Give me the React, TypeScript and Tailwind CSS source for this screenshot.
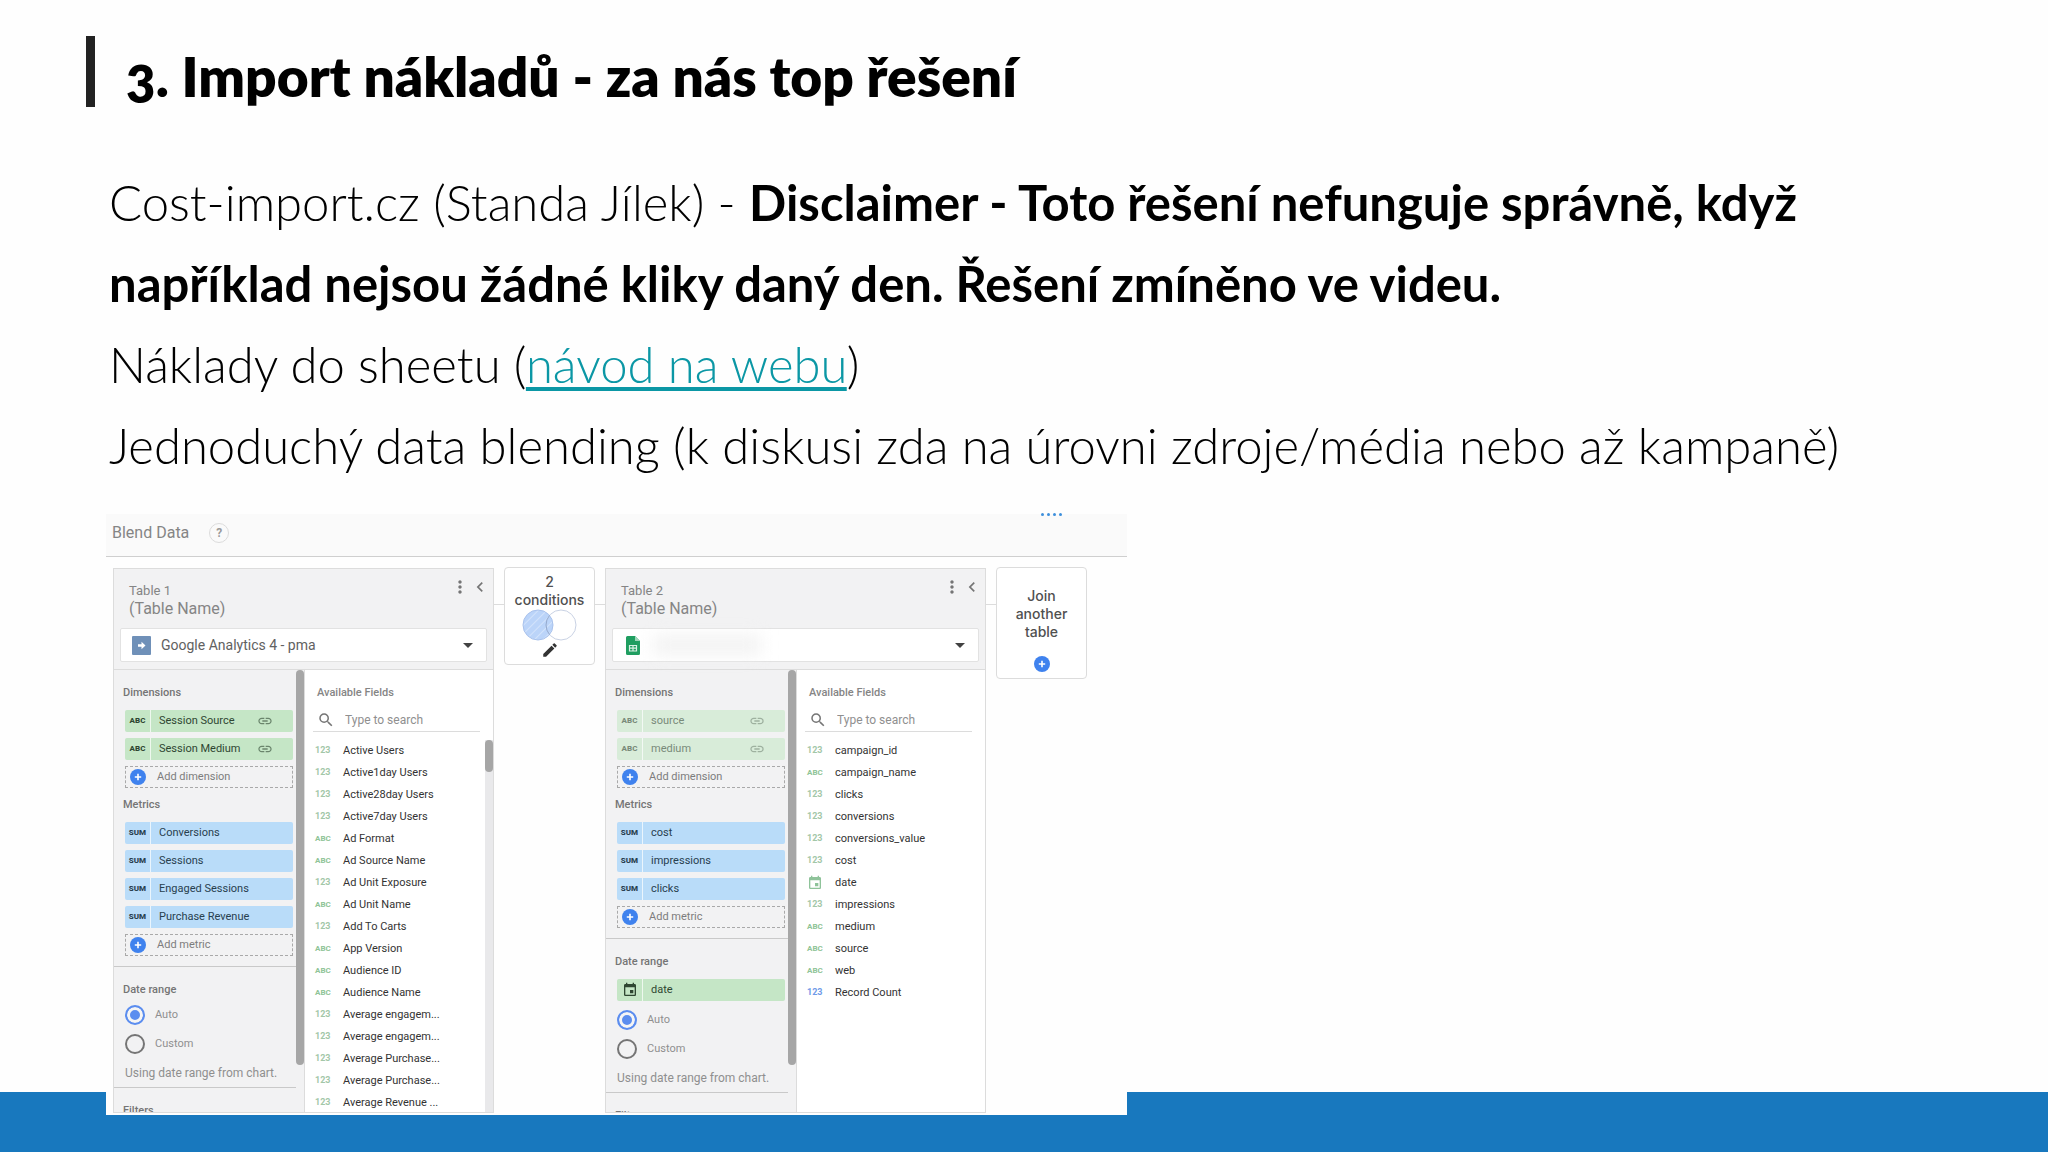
import { useState } from "react";
import type { ReactNode } from "react";
import { MdArrowDropDown, MdChevronLeft, MdEdit, MdEvent, MdLink, MdMoreVert, MdSearch } from "react-icons/md";

type FieldType = "123" | "ABC" | "DATE" | "COUNT";

interface Field {
  name: string;
  type: FieldType;
}

interface BlendTable {
  id: string;
  title: string;
  source: string;
  dimensions: string[];
  muted: boolean;
  metrics: string[];
  dateField?: string;
  fields: Field[];
  fieldsScroll: boolean;
}

const tables: BlendTable[] = [
  {
    id: "t1",
    title: "Table 1",
    source: "Google Analytics 4 - pma",
    dimensions: ["Session Source", "Session Medium"],
    muted: false,
    metrics: ["Conversions", "Sessions", "Engaged Sessions", "Purchase Revenue"],
    fieldsScroll: true,
    fields: [
      { name: "Active Users", type: "123" },
      { name: "Active1day Users", type: "123" },
      { name: "Active28day Users", type: "123" },
      { name: "Active7day Users", type: "123" },
      { name: "Ad Format", type: "ABC" },
      { name: "Ad Source Name", type: "ABC" },
      { name: "Ad Unit Exposure", type: "123" },
      { name: "Ad Unit Name", type: "ABC" },
      { name: "Add To Carts", type: "123" },
      { name: "App Version", type: "ABC" },
      { name: "Audience ID", type: "ABC" },
      { name: "Audience Name", type: "ABC" },
      { name: "Average engagem...", type: "123" },
      { name: "Average engagem...", type: "123" },
      { name: "Average Purchase...", type: "123" },
      { name: "Average Purchase...", type: "123" },
      { name: "Average Revenue ...", type: "123" },
    ],
  },
  {
    id: "t2",
    title: "Table 2",
    source: "",
    dimensions: ["source", "medium"],
    muted: true,
    metrics: ["cost", "impressions", "clicks"],
    dateField: "date",
    fieldsScroll: false,
    fields: [
      { name: "campaign_id", type: "123" },
      { name: "campaign_name", type: "ABC" },
      { name: "clicks", type: "123" },
      { name: "conversions", type: "123" },
      { name: "conversions_value", type: "123" },
      { name: "cost", type: "123" },
      { name: "date", type: "DATE" },
      { name: "impressions", type: "123" },
      { name: "medium", type: "ABC" },
      { name: "source", type: "ABC" },
      { name: "web", type: "ABC" },
      { name: "Record Count", type: "COUNT" },
    ],
  },
];

function PlusCircle() {
  return (
    <svg viewBox="0 0 16 16" className="size-4 shrink-0" aria-hidden="true">
      <circle cx="8" cy="8" r="8" fill="#3f82ee" />
      <path d="M8 4.8v6.4M4.8 8h6.4" stroke="#fff" strokeWidth="1.6" />
    </svg>
  );
}

function SheetsIcon() {
  return (
    <svg viewBox="0 0 14 19" className="h-[19px] w-[14px]" aria-hidden="true">
      <path d="M1.5 0H9l5 5v12.5a1.5 1.5 0 0 1-1.5 1.5h-11A1.5 1.5 0 0 1 0 17.5v-16A1.5 1.5 0 0 1 1.5 0z" fill="#1f9e60" />
      <path d="M9 0l5 5H9z" fill="#9ed6b9" />
      <path d="M3.5 9.5h7V15h-7zM3.5 12.2h7M7 9.5V15" fill="none" stroke="#d9f0e4" strokeWidth="1.2" />
    </svg>
  );
}

function AnalyticsIcon() {
  return (
    <svg viewBox="0 0 19 19" className="size-[19px]" aria-hidden="true">
      <rect width="19" height="19" rx="1" fill="#6f90b8" />
      <path d="M6 8.2h3.5V5.8l4 3.7-4 3.7v-2.400H6z" fill="#fff" />
    </svg>
  );
}

function VennIcon() {
  return (
    <svg viewBox="0 0 56 32" className="h-8 w-14" aria-hidden="true">
      <defs>
        <pattern id="hatch" width="6" height="6" patternUnits="userSpaceOnUse" patternTransform="rotate(45)">
          <rect width="6" height="6" fill="#bbd4f9" />
          <rect width="1" height="6" fill="#d3e3fb" />
        </pattern>
      </defs>
      <circle cx="39" cy="16" r="15" fill="#fff" stroke="#c9d2e4" />
      <circle cx="16" cy="16" r="15" fill="url(#hatch)" stroke="#a9c2ec" />
      <path d="M27.5 6.4a15 15 0 0 0 0 19.2" fill="none" stroke="#95a9cc" />
    </svg>
  );
}

function TypeIcon({ type }: { type: FieldType }) {
  if (type === "DATE") {
    return <MdEvent className="size-4 text-[#8fc39a]" />;
  }
  if (type === "ABC") {
    return <span className="text-[8px] font-bold text-[#8fc496]">ABC</span>;
  }
  return <span className={`text-[9px] font-bold ${type === "COUNT" ? "text-[#6f9be8]" : "text-[#a3c7a8]"}`}>123</span>;
}

interface ChipProps {
  icon: ReactNode;
  label: string;
  tone: "green" | "muted" | "blue";
  linked?: boolean;
}

const chipTones = {
  green: "bg-[#c5e6c6] text-[#2f4632]",
  muted: "bg-[#d8ecd9] text-[#788a7a]",
  blue: "bg-[#b9dcf9] text-[#28404f]",
};

function Chip({ icon, label, tone, linked }: ChipProps) {
  return (
    <button type="button" className={`flex h-[22px] w-full items-center rounded-xs text-left ${chipTones[tone]}`}>
      <span className="flex h-full w-[26px] items-center justify-center border-r border-white/70 text-[8px] font-extrabold">
        {icon}
      </span>
      <span className="flex-1 pl-2">{label}</span>
      {linked && <MdLink className="mr-5 size-4 opacity-60" />}
    </button>
  );
}

function AddButton({ label }: { label: string }) {
  return (
    <button
      type="button"
      className="flex h-[22px] w-full items-center gap-[11px] border border-dashed border-[#a9a9a9] pl-1 text-[#7d7d7d]"
    >
      <PlusCircle />
      {label}
    </button>
  );
}

function SectionTitle({ children }: { children: ReactNode }) {
  return <h3 className="-ml-[2px] leading-4 font-medium text-[#757575]">{children}</h3>;
}

function DateRadio({ name, value, checked, onChange }: { name: string; value: string; checked: boolean; onChange: () => void }) {
  return (
    <label className="flex items-center gap-[10px] text-[#8f8f8f]">
      <input
        type="radio"
        name={name}
        checked={checked}
        onChange={onChange}
        className="size-5 appearance-none rounded-full border-2 border-[#757575] checked:border-[#5b8def] checked:bg-[#5b8def] checked:shadow-[inset_0_0_0_3px_#f5f5f5]"
      />
      {value}
    </label>
  );
}

function TableCard({ table }: { table: BlendTable }) {
  const [range, setRange] = useState("Auto");
  const [query, setQuery] = useState("");
  const fields = table.fields.filter((f) => f.name.toLowerCase().includes(query.toLowerCase()));

  return (
    <section className="mt-px flex w-[381px] shrink-0 flex-col border border-[#dcdcdc] bg-[#f2f2f3]">
      <header className="h-[101px] border-b border-[#dcdcdc] px-[6px] pt-[13px]">
        <div className="flex justify-between">
          <div className="pl-[9px] text-[#858585]">
            <p className="text-[13px] leading-[18px]">{table.title}</p>
            <h2 className="text-base leading-[18px]">(Table Name)</h2>
          </div>
          <div className="-mt-[5px] -mr-[3px] flex h-5 items-center text-[#757575]">
            <button type="button" aria-label="More options">
              <MdMoreVert className="size-5" />
            </button>
            <button type="button" aria-label="Collapse">
              <MdChevronLeft className="size-5" />
            </button>
          </div>
        </div>
        <div className="relative mt-[10px] flex h-[34px] items-center rounded-xs border border-[#e2e2e2] bg-white">
          <span className="pointer-events-none absolute left-[10px] flex w-5 justify-center">
            {table.source ? <AnalyticsIcon /> : <SheetsIcon />}
          </span>
          <select
            aria-label={`${table.title} data source`}
            className="h-full w-full appearance-none bg-transparent pl-10 text-sm text-[#616161]"
          >
            <option>{table.source}</option>
          </select>
          {!table.source && <span className="absolute left-10 h-5 w-[108px] bg-[#f3f3f3] blur-sm" />}
          <MdArrowDropDown className="pointer-events-none absolute right-[6px] size-6 text-[#424242]" />
        </div>
      </header>

      <div className="flex min-h-0 flex-1">
        <div className="relative w-[191px] overflow-hidden border-r border-[#dcdcdc]">
          <div className="flex flex-col gap-[6px] px-[11px] pt-[15px]">
            <div className="pb-[3px]">
              <SectionTitle>Dimensions</SectionTitle>
            </div>
            {table.dimensions.map((d) => (
              <Chip key={d} icon="ABC" label={d} tone={table.muted ? "muted" : "green"} linked />
            ))}
            <AddButton label="Add dimension" />
            <div className="py-[3px]">
              <SectionTitle>Metrics</SectionTitle>
            </div>
            {table.metrics.map((m) => (
              <Chip key={m} icon="SUM" label={m} tone="blue" />
            ))}
            <AddButton label="Add metric" />
          </div>
          <div className="mt-[10px] mr-2 border-t border-[#c9c9c9] pt-[15px] pl-[11px]">
            <SectionTitle>Date range</SectionTitle>
            {table.dateField && (
              <div className="mt-[9px] pr-[3px] pb-[2px]">
                <Chip icon={<MdEvent className="size-4" />} label={table.dateField} tone="green" />
              </div>
            )}
            <div className="mt-[7px] flex flex-col gap-[9px]">
              {["Auto", "Custom"].map((v) => (
                <DateRadio key={v} name={`${table.id}-range`} value={v} checked={range === v} onChange={() => setRange(v)} />
              ))}
            </div>
            <p className="mt-[11px] text-[12px] leading-4 text-[#8f8f8f]">Using date range from chart.</p>
          </div>
          <div className="mt-[6px] mr-2 border-t border-[#c9c9c9] pt-[15px] pl-[11px]">
            <SectionTitle>Filters</SectionTitle>
          </div>
          {/* scrollbar thumb */}
          <span className="absolute top-0 right-0 h-[395px] w-2 rounded-full bg-[#a6a6a6]" />
        </div>

        <div className="flex min-w-0 flex-1 flex-col bg-white">
          <h3 className="pt-[15px] pl-3 leading-4 font-medium text-[#858585]">Available Fields</h3>
          <label className="mt-2 mr-[13px] ml-2 flex h-[23px] items-center gap-[10px] border-b border-[#dcdcdc] pl-1">
            <MdSearch className="size-[18px] shrink-0 text-[#757575]" />
            <input
              type="text"
              value={query}
              onChange={(e) => setQuery(e.target.value)}
              placeholder="Type to search"
              aria-label="Search fields"
              className="w-full min-w-0 bg-transparent text-[12px] outline-none placeholder:text-[#8f8f8f]"
            />
          </label>
          <div className="mt-2 flex min-h-0 flex-1">
            <ul className="min-w-0 flex-1 overflow-hidden pl-[10px]">
              {fields.map((f, i) => (
                <li key={i} className="flex h-[22px] items-center">
                  <span className="flex w-7 items-center">
                    <TypeIcon type={f.type} />
                  </span>
                  <span className="text-[#333]">{f.name}</span>
                </li>
              ))}
            </ul>
            {table.fieldsScroll && (
              <div className="w-2 bg-[#e9e9eb]">
                <div className="h-8 rounded-full bg-[#a6a6a6]" />
              </div>
            )}
          </div>
        </div>
      </div>
    </section>
  );
}

function Connector() {
  return <span className="mt-[37px] h-px w-[10px] shrink-0 bg-[#dcdcdc]" />;
}

export default function App() {
  return (
    <main className="flex min-h-screen flex-col bg-[#fefefe] font-['Lato',sans-serif] text-black">
      <header className="mt-9 ml-[86px] flex h-[71px] items-center border-l-[9px] border-[#222] pt-[10px] pl-[31px]">
        <h1 className="text-[55px] leading-[61px] font-extrabold oldstyle-nums">3. Import nákladů - za nás top řešení</h1>
      </header>

      <div className="mt-[55px] ml-[109px] text-[49px] leading-[81px] font-light">
        <p>
          Cost-import.cz (Standa Jílek) -{" "}
          <strong className="font-bold">
            Disclaimer - Toto řešení nefunguje správně, když
            <br />
            například nejsou žádné kliky daný den. Řešení zmíněno ve videu.
          </strong>
        </p>
        <p>
          Náklady do sheetu (
          <a href="#navod" className="text-[#0b97a5] underline decoration-4 underline-offset-4">
            návod na webu
          </a>
          )
        </p>
        <p>Jednoduchý data blending (k diskusi zda na úrovni zdroje/média nebo až kampaně)</p>
      </div>

      <div className="relative z-10 mt-7 ml-[106px] flex h-[601px] w-full max-w-[1021px] flex-col bg-[#fefefe] font-['Roboto',sans-serif] text-[11px]">
        <div className="relative flex h-[43px] shrink-0 items-center gap-5 border-b border-[#cfcfcf] bg-[#fafafa] pb-[5px] pl-[6px]">
          <h2 className="text-base text-[#858585]">Blend Data</h2>
          <button
            type="button"
            aria-label="Help"
            className="size-5 rounded-full border border-[#dcdcdc] text-[12px] leading-none font-bold text-[#9a9a9a]"
          >
            ?
          </button>
          <span className="absolute -top-px right-[65px] flex gap-[3px]">
            {[0, 1, 2, 3].map((i) => (
              <span key={i} className="size-[3px] rounded-full bg-[#3d8fdc]" />
            ))}
          </span>
        </div>

        <div className="flex min-h-0 flex-1 items-stretch pt-[10px] pb-[2px] pl-[7px]">
          <TableCard table={tables[0]} />
          <Connector />
          <button
            type="button"
            className="flex h-[98px] w-[91px] shrink-0 flex-col items-center rounded-sm border border-[#dcdcdc] bg-white pt-[5px] font-['Inter',sans-serif] text-sm leading-[18px] font-medium text-[#505050]"
          >
            <span>2</span>
            <span>conditions</span>
            <VennIcon />
            <MdEdit className="size-[18px] text-[#333]" />
          </button>
          <Connector />
          <TableCard table={tables[1]} />
          <Connector />
          <button
            type="button"
            className="flex h-[112px] w-[91px] shrink-0 flex-col items-center rounded-sm border border-[#dcdcdc] bg-white pt-[19px] font-['Inter',sans-serif] text-sm leading-[18px] font-medium text-[#505050]"
          >
            <span>Join</span>
            <span>another</span>
            <span className="mb-[15px]">table</span>
            <PlusCircle />
          </button>
        </div>
      </div>

      <footer className="-mt-[23px] min-h-[60px] flex-1 bg-[#1878be]" />
    </main>
  );
}
